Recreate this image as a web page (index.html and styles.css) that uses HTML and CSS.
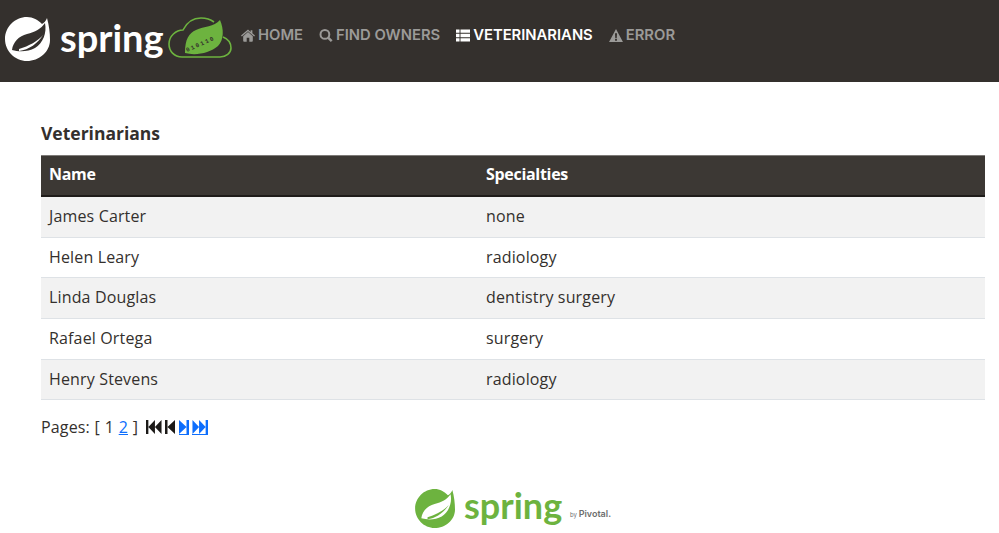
FILE: index.html
```html
<!DOCTYPE html>
<html lang="en">
	<head>
		<meta charset="UTF-8" />
		<meta name="viewport" content="width=device-width, initial-scale=1.0" />
		<title>Veterinarians</title>
		<link rel="stylesheet" href="styles.css">
	</head>

	<body>
		<div class="navbar">
			<div class="brand">
				<svg class="brand__leaf" viewBox="0 0 46 44" aria-hidden="true">
					<path fill="#fff" d="M42 1c-1 3-3 5-5 6C33 3 28 0 22 0 10 0 0 10 0 22s10 22 22 22c12 0 23-9 23-21 0-7-1-15-3-22z" />
					<path fill="#34302d" d="M7 33C8 25 14 19 22 17 30 15 36 12 40 6c2 10-2 20-10 25-7 4-16 4-23 2z" />
					<path fill="#fff" d="M14 34c10-1 19-8 24-16-5 6-14 11-24 14z" />
				</svg>
				<span class="brand__word">spring</span>
				<svg class="brand__cloud" viewBox="0 0 64 44" aria-hidden="true">
					<path fill="none" stroke="#6db33f" stroke-width="1.600" d="M46 7C42 4 38 3 33 3 26 3 19 7 15 15 8 15 1 21 1 29c0 7 5 13 13 13h38c6 0 11-4 11-9 0-5-3-9-8-11" />
					<path fill="#6db33f" d="M52 5C46 12 36 11 28 15 21 18 17 24 17 38c11 3 25 0 33-7 6-6 6-17 2-26z" />
					<text class="brand__bits" x="19" y="37" transform="rotate(-24 19 37)">010110</text>
				</svg>
			</div>
			<ul class="menu">
				<li>
					<a href="#">
						<svg class="icon" viewBox="0 0 16 14"><path d="M8 0 0 7l1 1 7-6 7 6 1-1-3-2.600V1h-2v2zM8 3 2.500 7.800V13a1 1 0 0 0 1 1H6.500V9.500h3V14h3a1 1 0 0 0 1-1V7.800z" /></svg>
						Home
					</a>
				</li>
				<li>
					<a href="#">
						<svg class="icon" viewBox="0 0 13 13"><path fill="none" stroke="currentColor" stroke-width="2" d="M5.400 1a4.400 4.400 0 1 0 0 8.800 4.400 4.400 0 0 0 0-8.800z" /><path fill="none" stroke="currentColor" stroke-width="2.400" d="m8.600 8.600 3.600 3.600" /></svg>
						Find owners
					</a>
				</li>
				<li class="menu__active">
					<a href="#">
						<svg class="icon" viewBox="0 0 15 13"><path d="M0 0h3.800v3.600H0zM4.800 0H15v3.600H4.800zM0 4.700h3.800v3.600H0zM4.800 4.700H15v3.600H4.800zM0 9.400h3.800V13H0zM4.800 9.400H15V13H4.800z" /></svg>
						Veterinarians
					</a>
				</li>
				<li>
					<a href="#">
						<svg class="icon" viewBox="0 0 15 14"><path fill-rule="evenodd" d="M7.500 0 15 14H0zM6.400 4.700l.3 5h1.600l.3-5zM6.500 10.600v2h2v-2z" /></svg>
						Error
					</a>
				</li>
			</ul>
		</div>

		<div class="content">
			<h2>Veterinarians</h2>
			<table class="vets">
				<thead>
					<tr><th class="vets__name">Name</th><th>Specialties</th></tr>
				</thead>
				<tbody>
					<tr><td>James Carter</td><td>none</td></tr>
					<tr><td>Helen Leary</td><td>radiology</td></tr>
					<tr><td>Linda Douglas</td><td>dentistry surgery</td></tr>
					<tr><td>Rafael Ortega</td><td>surgery</td></tr>
					<tr><td>Henry Stevens</td><td>radiology</td></tr>
				</tbody>
			</table>

			<div class="pages">
				<span>Pages:</span>
				<span>[</span>
				<span>1</span>
				<a href="#">2</a>
				<span>]</span>
				<div class="pages__nav">
					<svg class="step" viewBox="0 0 17 14" preserveAspectRatio="none"><path d="M0 0h2.500v14H0zM2.500 7 9.500 0v14zM9.500 7l7-7v14z" /></svg>
					<svg class="step step--single" viewBox="0 0 10 14" preserveAspectRatio="none"><path d="M0 0h2.500v14H0zM2.500 7 10 0v14z" /></svg>
					<a href="#" class="step-link"><svg class="step step--single" viewBox="0 0 10 14" preserveAspectRatio="none"><path d="M10 0H7.500v14H10zM7.500 7 0 0v14z" /></svg></a>
					<a href="#" class="step-link"><svg class="step" viewBox="0 0 17 14" preserveAspectRatio="none"><path d="M17 0h-2.500v14H17zM14.500 7l-7-7v14zM7.500 7l-7-7v14z" /></svg></a>
				</div>
			</div>

			<div class="footer">
				<svg class="footer__leaf" viewBox="0 0 46 44" aria-hidden="true">
					<path fill="#6db33f" d="M42 1c-1 3-3 5-5 6C33 3 28 0 22 0 10 0 0 10 0 22s10 22 22 22c12 0 23-9 23-21 0-7-1-15-3-22z" />
					<path fill="#fff" d="M7 33C8 25 14 19 22 17 30 15 36 12 40 6c2 10-2 20-10 25-7 4-16 4-23 2z" />
					<path fill="#6db33f" d="M14 34c10-1 19-8 24-16-5 6-14 11-24 14z" />
				</svg>
				<span class="footer__word">spring</span>
				<span class="footer__by">by <b>Pivotal.</b></span>
			</div>
		</div>
	</body>
</html>
```

FILE: styles.css
```css
* {
	margin: 0;
	box-sizing: border-box;
}

html,
body {
	height: 100%;
	overflow: hidden;
}

body {
	font-family: "Open Sans", "Noto Sans", sans-serif;
	font-size: 16px;
	letter-spacing: 0.15px;
	color: #34302d;
	background: #fff;
}

.navbar {
	display: flex;
	align-items: flex-start;
	height: 82px;
	background: #34302d;
}

.brand {
	display: flex;
	align-items: flex-start;
	width: 236px;
	flex: none;
	padding: 15px 0 0 5px;
}

.brand__leaf {
	width: 46px;
	height: 44px;
	flex: none;
	margin-top: 2px;
}

.brand__word {
	width: 104px;
	flex: none;
	margin: -3px 0 0 9px;
	font-family: "Lato", sans-serif;
	font-size: 38px;
	font-weight: 700;
	line-height: 50px;
	letter-spacing: 0;
	color: #fff;
}

.brand__cloud {
	width: 64px;
	height: 44px;
	flex: none;
	margin-left: 4px;
}

.brand__bits {
	font-family: "Liberation Mono", monospace;
	font-size: 6px;
	font-weight: bold;
	letter-spacing: 1.600px;
	fill: #34302d;
}

.menu {
	display: flex;
	gap: 16px;
	list-style: none;
	padding: 26px 0 0 5px;
}

.menu a {
	display: flex;
	align-items: center;
	gap: 3px;
	font-family: "Inter", sans-serif;
	font-size: 14.800px;
	font-weight: 600;
	line-height: 18px;
	letter-spacing: 0;
	text-decoration: none;
	text-transform: uppercase;
	color: #9b9a98;
}

.menu__active a {
	color: #fff;
}

.icon {
	width: 14px;
	height: 13px;
	fill: currentColor;
}

.content {
	padding: 39px 14px 0 41px;
}

h2 {
	font-size: 17.500px;
	font-weight: 700;
	line-height: 24px;
	letter-spacing: 0;
	margin-bottom: 10px;
}

.vets {
	width: 944px;
	table-layout: fixed;
	border-collapse: separate;
	border-spacing: 0;
}

.vets th {
	height: 42px;
	padding: 0 8px 4px;
	text-align: left;
	font-weight: 700;
	letter-spacing: -0.300px;
	color: #fff;
	background: #3c3834;
	border-top: 1px solid #7d7a77;
	border-bottom: 2px solid #1f1c1a;
}

.vets .vets__name {
	width: 437px;
}

.vets td {
	height: 40.700px;
	padding: 0 8px 2px;
	border-bottom: 1px solid #dee2e6;
}

.vets tbody tr:nth-child(odd) {
	background: #f2f2f2;
}

.pages {
	display: flex;
	align-items: center;
	gap: 4.700px;
	height: 20px;
	margin-top: 17px;
}

.pages a {
	color: #0d6efd;
}

.pages__nav {
	display: flex;
	align-items: center;
	gap: 3.500px;
	margin-left: 3px;
}

.step {
	display: block;
	width: 16px;
	height: 14px;
	fill: #1c1a18;
}

.step--single {
	width: 10px;
}

.step-link {
	display: block;
	border-bottom: 1px solid #0d6efd;
}

.step-link .step {
	fill: #0d6efd;
}

.footer {
	display: flex;
	align-items: flex-start;
	width: 197px;
	margin: 52px 0 0 374px;
}

.footer__leaf {
	width: 41px;
	height: 39px;
	flex: none;
}

.footer__word {
	width: 98px;
	flex: none;
	margin: -8px 0 0 8px;
	font-family: "Lato", sans-serif;
	font-size: 36px;
	font-weight: 700;
	line-height: 48px;
	letter-spacing: 0;
	color: #6db33f;
}

.footer__by {
	margin: 19px 0 0 8px;
	font-family: "Inter", sans-serif;
	font-size: 6px;
	letter-spacing: 0;
	white-space: nowrap;
	color: #6d6d6d;
}

.footer__by b {
	font-size: 9px;
	font-weight: 600;
}
```
